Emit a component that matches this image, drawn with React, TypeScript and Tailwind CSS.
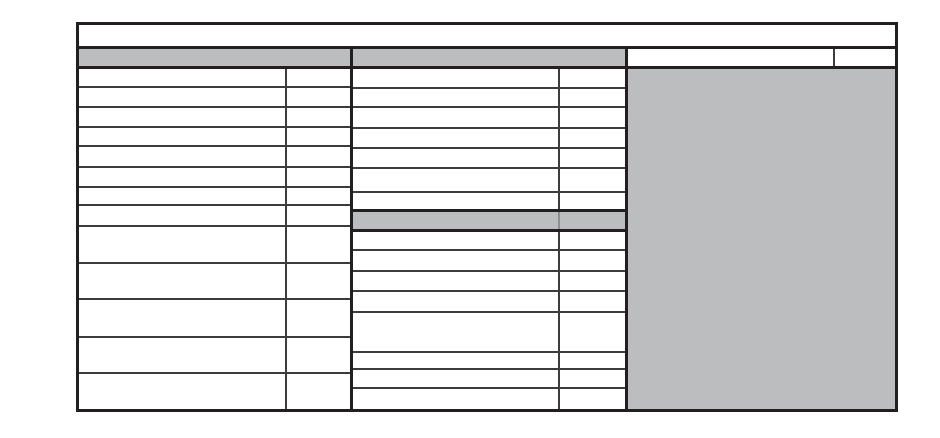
const leftRows = [19, 20, 20, 19, 21, 20, 18, 21, 37, 36, 38, 36, 35];

type MidRow = { h: number; kind?: 'thick' | 'gray' | 'last' };

const midRows: MidRow[] = [
  { h: 20 },
  { h: 19 },
  { h: 21 },
  { h: 20 },
  { h: 20 },
  { h: 24 },
  { h: 19, kind: 'thick' },
  { h: 20, kind: 'gray' },
  { h: 19 },
  { h: 21 },
  { h: 20 },
  { h: 21 },
  { h: 40 },
  { h: 17 },
  { h: 19 },
  { h: 20, kind: 'last' },
];

function LeftColumn() {
  return (
    <div className="flex w-[274px] flex-col border-r-[3px] border-[#231f20]">
      {leftRows.map((h, i) => {
        const last = i === leftRows.length - 1;
        return (
          <div
            key={i}
            className={last ? 'flex' : 'flex border-b-2 border-[#3d3b3c]'}
            style={{ height: h }}
          >
            <div className="w-[208px] border-r-2 border-[#3d3b3c]" />
            <div className="flex-1" />
          </div>
        );
      })}
    </div>
  );
}

function MiddleColumn() {
  return (
    <div className="flex w-[275px] flex-col border-r-[3px] border-[#231f20]">
      {midRows.map((r, i) => {
        let cls = 'flex border-b-2 border-[#3d3b3c]';
        if (r.kind === 'thick') cls = 'flex border-b-[3px] border-[#231f20]';
        if (r.kind === 'gray') cls = 'flex border-b-[3px] border-[#231f20] bg-[#bcbdbf]';
        if (r.kind === 'last') cls = 'flex';
        return (
          <div key={i} className={cls} style={{ height: r.h }}>
            <div
              className={
                r.kind === 'gray'
                  ? 'w-[207px] border-r-2 border-[#8e8e90]'
                  : 'w-[207px] border-r-2 border-[#3d3b3c]'
              }
            />
            <div className="flex-1" />
          </div>
        );
      })}
    </div>
  );
}

export default function App() {
  return (
    <div className="h-[438px] w-[940px] bg-white pl-[76px] pt-[22px]">
      <div className="flex h-[390px] w-[822px] flex-col border-[3px] border-[#231f20]">
        {/* title */}
        <div className="h-[24px] border-b-[3px] border-[#231f20]" />

        {/* header */}
        <div className="flex h-[20px] border-b-[3px] border-[#231f20]">
          <div className="w-[274px] border-r-[3px] border-[#231f20] bg-[#bcbdbf]" />
          <div className="w-[275px] border-r-[3px] border-[#231f20] bg-[#bcbdbf]" />
          <div className="flex flex-1">
            <div className="w-[207px] border-r-2 border-[#3d3b3c]" />
            <div className="flex-1" />
          </div>
        </div>

        {/* body */}
        <div className="flex flex-1">
          <LeftColumn />
          <MiddleColumn />
          <div className="flex-1 bg-[#bcbdbf]" />
        </div>
      </div>
    </div>
  );
}
